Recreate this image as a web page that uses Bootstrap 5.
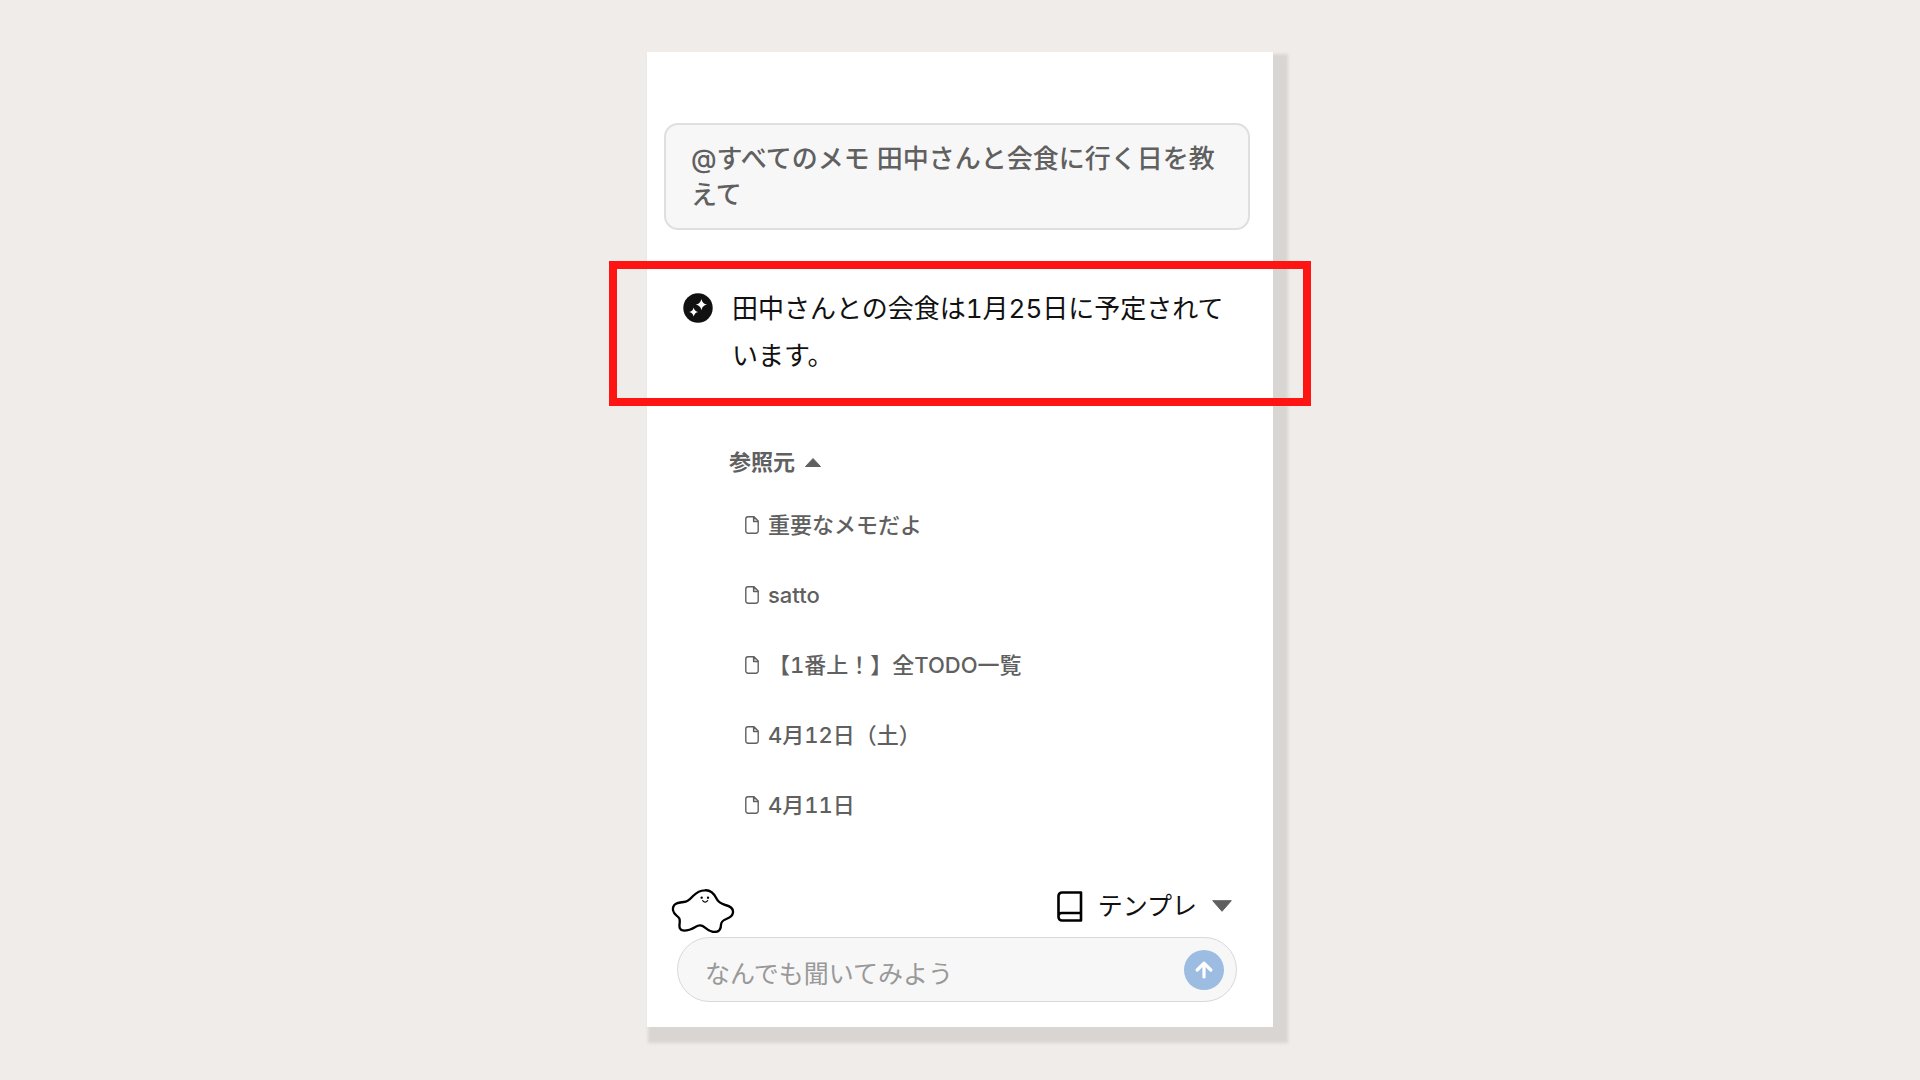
<!DOCTYPE html>
<html lang="ja">
<head>
<meta charset="utf-8">
<meta name="viewport" content="width=device-width, initial-scale=1">
<title>メモに聞く</title>
<link href="https://cdn.jsdelivr.net/npm/bootstrap@5.3.0/dist/css/bootstrap.min.css" rel="stylesheet">
<style>
  body {
    background: #f0ece9;
    color: #111;
    font-family: Inter, "Noto Sans CJK JP", sans-serif;
    font-size: 25px;
    font-variant-numeric: tabular-nums;
    padding: 52px 40px 36px;
  }
  .chat-panel {
    max-width: 626px;
    padding: 71px 23px 25px 17px;
    background: #fff;
    box-shadow: 8px 9px 3px 7px #d9d5d2;
  }
  .question {
    padding: 16px 24px 15px 25px;
    border: 2px solid #dfdfdf;
    border-radius: 14px;
    background: #f7f7f7;
    color: #606060;
    font-size: 26px;
    line-height: 36px;
  }
  .answer {
    gap: 19px;
    margin: 31px -61px 0 -55px;
    padding: 16px 72px 19px 66px;
    border: 8px solid #ff1414;
    font-size: 26px;
    line-height: 47px;
  }
  .answer svg { margin-top: 8px; }
  .sources {
    margin: 40px 0 0 65px;
    color: #606060;
    font-size: 22px;
  }
  .toggle {
    padding: 0;
    border: 0;
    background: none;
    color: inherit;
  }
  .sources .toggle { gap: 10px; line-height: 32px; }
  .source-list { gap: 40px; margin: 32px 0 0 16px; line-height: 30px; }
  .source-list a { gap: 9px; color: inherit; }
  .tools { margin: 69px 18px 4px 7px; }
  .tools .toggle { gap: 15px; line-height: 34px; }
  .composer {
    margin: 0 13px;
    padding: 0 12px 0 27px;
    height: 65px;
    border: 1px solid #d8d8d8;
    border-radius: 33px;
    background: #f7f7f7;
  }
  .composer input {
    min-width: 0;
    padding: 10px 0 0;
    border: 0;
    outline: 0;
    background: none;
  }
  .composer input::placeholder { color: #999; opacity: 1; }
  .send {
    width: 40px;
    height: 40px;
    padding: 0;
    border: 0;
    background: #9dbce2;
  }
</style>
</head>
<body>
<svg class="d-none" aria-hidden="true">
  <symbol id="page" viewBox="0 0 14 18">
    <path d="M3 .8h6l4.2 4.3v9.900a2.200 2.200 0 0 1-2.200 2.200H3A2.200 2.200 0 0 1 .8 15V3A2.200 2.200 0 0 1 3 .8zM8.600 1v4.600h4.500" fill="none" stroke="currentColor" stroke-width="1.400" stroke-linejoin="round"/>
    <path d="M8.600 1l4.500 4.600H8.600z" fill="currentColor" fill-opacity=".35"/>
  </symbol>
</svg>
<main class="chat-panel mx-auto">
  <div class="question fw-medium">@すべてのメモ 田中さんと会食に行く日を教えて</div>

  <section class="answer d-flex align-items-start position-relative">
    <svg class="flex-shrink-0" width="30" height="30" viewBox="0 0 30 30" aria-hidden="true">
      <circle cx="15" cy="15" r="14.7" fill="#111"/>
      <path d="M18.400 6q.8 4.700 5.600 5.600-4.800.9-5.600 5.700-.9-4.800-5.600-5.700 4.700-.9 5.600-5.600zM10.700 14.500q.7 3.700 4.500 4.500-3.800.8-4.500 4.600-.8-3.800-4.600-4.600 3.800-.8 4.600-4.500z" fill="#fff"/>
    </svg>
    <p class="mb-0">田中さんとの会食は1月25日に予定されています。</p>
  </section>

  <section class="sources fw-medium">
    <button type="button" class="toggle d-flex align-items-center fw-bold" aria-expanded="true" aria-controls="source-list">参照元
      <svg width="16" height="9" viewBox="0 0 16 9" aria-hidden="true"><path d="M.5 8.500 8 .5l7.500 8z" fill="currentColor" stroke="currentColor" stroke-linejoin="round"/></svg>
    </button>
    <ul id="source-list" class="source-list list-unstyled d-flex flex-column">
      <li><a href="#" class="d-flex align-items-center text-decoration-none"><svg width="14" height="18"><use href="#page"/></svg>重要なメモだよ</a></li>
      <li><a href="#" class="d-flex align-items-center text-decoration-none"><svg width="14" height="18"><use href="#page"/></svg>satto</a></li>
      <li><a href="#" class="d-flex align-items-center text-decoration-none"><svg width="14" height="18"><use href="#page"/></svg>【1番上！】全TODO一覧</a></li>
      <li><a href="#" class="d-flex align-items-center text-decoration-none"><svg width="14" height="18"><use href="#page"/></svg>4月12日（土）</a></li>
      <li><a href="#" class="d-flex align-items-center text-decoration-none"><svg width="14" height="18"><use href="#page"/></svg>4月11日</a></li>
    </ul>
  </section>

  <div class="tools d-flex justify-content-between align-items-start">
    <svg width="64" height="44" viewBox="92 58 192 132" aria-hidden="true">
      <path d="M193 62C212 60 222 74 228 86 233 97 240 102 255 106 272 110 279 117 278 128 277 140 268 144 258 148 246 153 243 156 242 165 242 180 236 187 222 187 208 187 202 181 193 173 184 165 176 165 165 172 155 178 145 183 131 183 118 182 116 174 118 160 119 149 118 144 108 137 98 129 95 117 101 107 107 99 118 98 130 97 143 96 149 89 158 79 168 69 180 62 193 62z" fill="#fff" stroke="#000" stroke-width="7"/>
      <circle cx="184" cy="84" r="3.500"/><circle cx="203" cy="84" r="3.500"/>
      <path d="M187 93q7 9 15 0" fill="none" stroke="#000" stroke-width="3.500" stroke-linecap="round"/>
    </svg>
    <button type="button" class="toggle d-flex align-items-center" aria-expanded="false">
      <svg width="26" height="31" viewBox="0 0 26 31" aria-hidden="true"><path d="M24 22V1.500H5A3.500 3.500 0 0 0 1.500 5v21A3.500 3.500 0 0 0 5 29.500h19V22H4.500A3 3 0 0 0 1.500 25" fill="none" stroke="#000" stroke-width="2.600" stroke-linejoin="round"/></svg>
      テンプレ
      <svg width="20" height="12" viewBox="0 0 20 12" aria-hidden="true"><path d="M.7.700h18.600L10 11.300z" fill="#606060" stroke="#606060" stroke-linejoin="round"/></svg>
    </button>
  </div>

  <form class="composer d-flex align-items-center">
    <input type="text" class="flex-grow-1" placeholder="なんでも聞いてみよう" aria-label="なんでも聞いてみよう">
    <button type="button" class="send rounded-circle d-flex align-items-center justify-content-center flex-shrink-0" aria-label="送信">
      <svg width="18" height="18" viewBox="0 0 18 18" aria-hidden="true"><path d="M9 16V2.500M2.200 9 9 2.200 15.800 9" fill="none" stroke="#fff" stroke-width="3.200" stroke-linecap="round" stroke-linejoin="round"/></svg>
    </button>
  </form>
</main>
<script src="https://cdn.jsdelivr.net/npm/bootstrap@5.3.0/dist/js/bootstrap.bundle.min.js"></script>
</body>
</html>
